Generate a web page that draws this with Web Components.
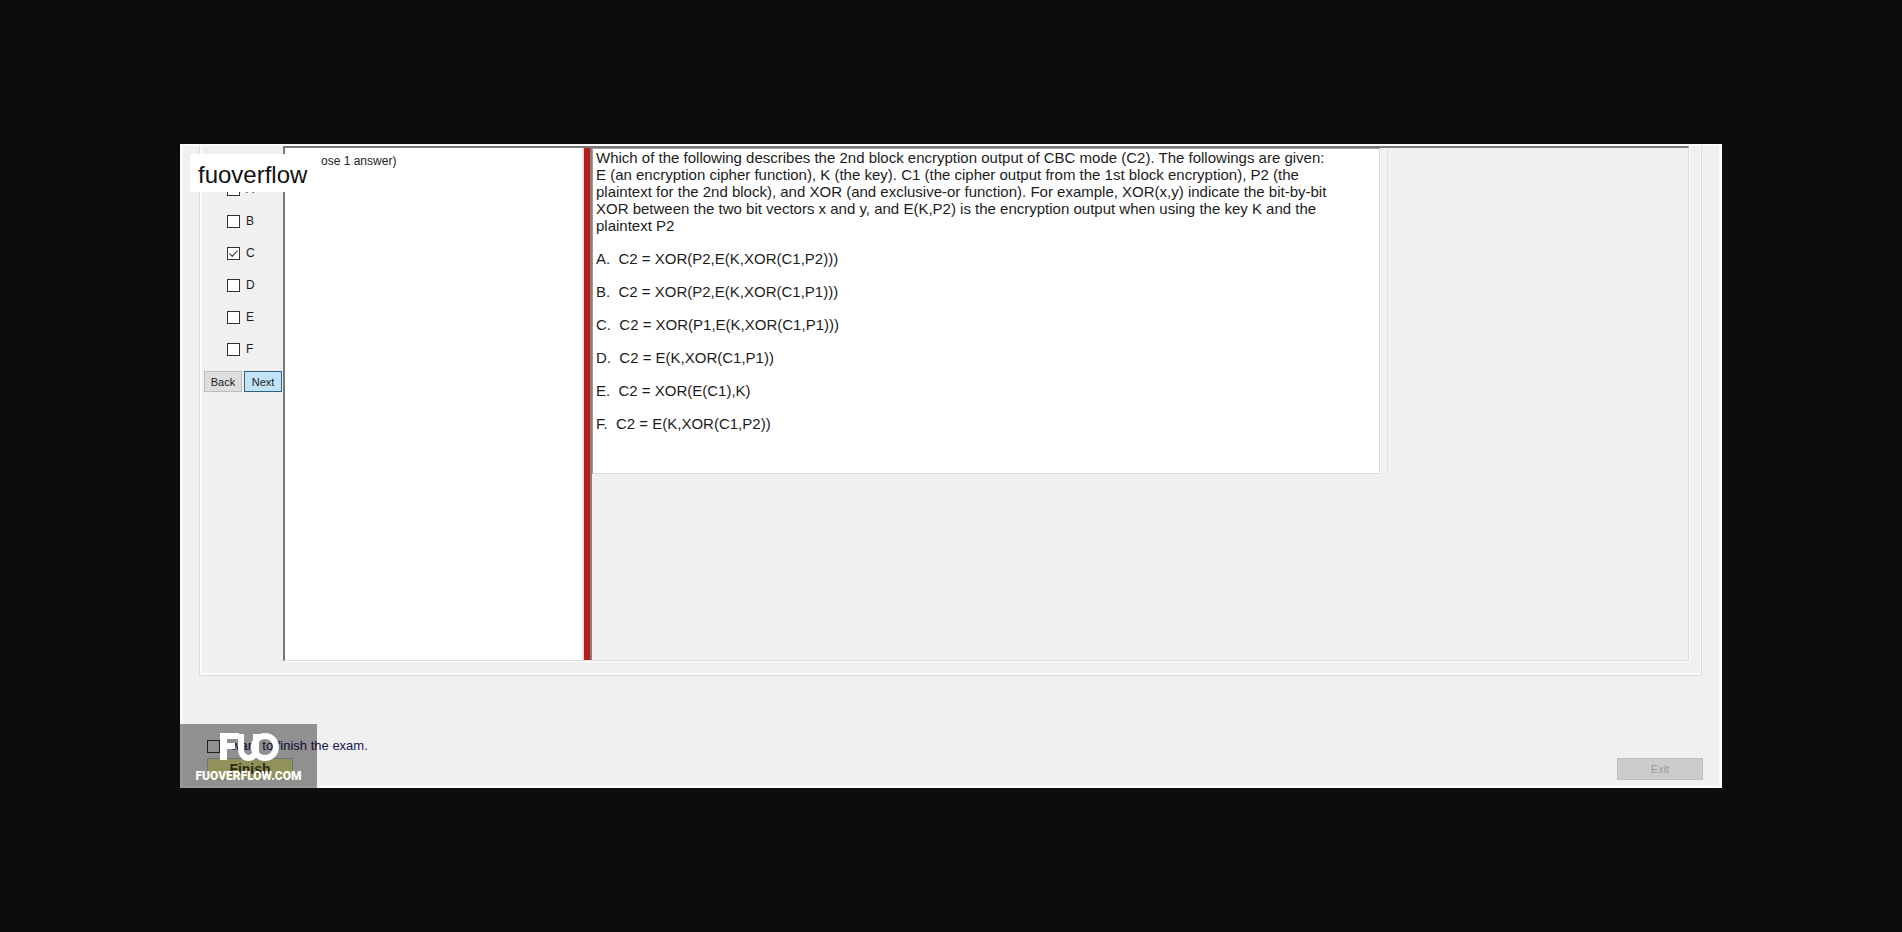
<!DOCTYPE html>
<html lang="en">
<head>
<meta charset="utf-8">
<title>Exam</title>
<style>
  body { margin: 0; background: #0d0d0d; font-family: "Liberation Sans", Arial, sans-serif; color: #1c1c1c; }
</style>
</head>
<body>
<exam-viewer></exam-viewer>

<template id="viewer-tpl">
  <style>
    :host { display: flex; box-sizing: border-box; min-height: 100vh; padding: 144px 180px; }
    main { position: relative; flex: 1; display: flex; flex-direction: column; background: #f0f0f0; border: 2px solid #fcfcfc; border-width: 2px 3px; box-sizing: border-box; }
    .group { flex: 1; display: flex; margin: 0 17px 0 16px; padding: 0 12px 14px 0; border: 1px solid #dcdcdc; border-top: 0; box-shadow: inset 2px -2px #fcfcfc, inset -1px 0 #fcfcfc; }
    answer-list { width: 83px; }
    .panes { flex: 1; display: flex; border: 1px solid #dcdcdc; border-top: 2px solid #777; border-left: 2px solid #777; box-shadow: 1px 1px #fcfcfc; }
    .note { width: 297px; background: #fff; font-size: 12px; line-height: 14px; padding: 6px 0 0 10px; box-sizing: border-box; }
    .split { width: 6px; background: #b01f1c; border-left: 2px solid #fbdcda; border-right: 2px solid #8b7b7d; }
    .work { flex: 1; }
    question-card { width: 795px; max-width: 100%; }
    exam-footer { height: 110px; }
    .tag { position: absolute; left: 7px; top: 8px; width: 131px; height: 38px; box-sizing: border-box; padding: 7px 8px 3px; background: #fff; color: #111; font-size: 24px; line-height: 28px; }
    brand-mark { position: absolute; left: -3px; bottom: -2px; }
  </style>
  <main>
    <div class="group">
      <answer-list></answer-list>
      <div class="panes">
        <div class="note">(Choose 1 answer)</div>
        <div class="split"></div>
        <div class="work">
          <question-card>
            <p>Which of the following describes the 2nd block encryption output of CBC mode (C2). The followings are given:<br>E (an encryption cipher function), K (the key). C1 (the cipher output from the 1st block encryption), P2 (the<br>plaintext for the 2nd block), and XOR (and exclusive-or function). For example, XOR(x,y) indicate the bit-by-bit<br>XOR between the two bit vectors x and y, and E(K,P2) is the encryption output when using the key K and the<br>plaintext P2</p>
          </question-card>
        </div>
      </div>
    </div>
    <exam-footer></exam-footer>
    <div class="tag">fuoverflow</div>
    <brand-mark></brand-mark>
  </main>
</template>

<template id="answers-tpl">
  <style>
    :host { display: block; padding-top: 27px; box-sizing: border-box; }
    .opt { display: flex; align-items: center; gap: 6px; height: 32px; padding-left: 27px; font-size: 12px; line-height: 14px; }
    .nav { display: flex; gap: 2px; padding: 6px 0 0 4px; }
    button { font: 11px/14px "Liberation Sans", Arial, sans-serif; box-sizing: border-box; width: 38px; height: 21px; padding: 0; border: 1px solid #bdbdbd; background: #dedede; color: #1c1c1c; }
    button.next { background: #c2e2f6; border-color: #2b5f86; }
  </style>
  <div class="list"></div>
  <div class="nav"><button type="button">Back</button><button type="button" class="next">Next</button></div>
</template>

<template id="tick-tpl">
  <style>
    :host { display: block; width: 13px; height: 13px; }
    input { appearance: none; display: block; margin: 0; width: 13px; height: 13px; box-sizing: border-box; border: 1px solid #333; background: var(--tick-bg, #fff); }
    input:checked { background: #fff url("data:image/svg+xml,%3Csvg xmlns='http://www.w3.org/2000/svg' viewBox='0 0 11 11'%3E%3Cpath d='M1.5 5.5L4.2 8.3L9.5 2.6' fill='none' stroke='%23444' stroke-width='1.2'/%3E%3C/svg%3E"); }
  </style>
  <input type="checkbox">
</template>

<template id="question-tpl">
  <style>
    :host { display: block; box-sizing: border-box; border-right: 7px solid #f3f3f3; box-shadow: 1px 0 #e2e2e2; }
    section { box-sizing: border-box; min-height: 326px; background: #fff; border-top: 1px solid #999; border-left: 1px solid #999; border-bottom: 1px solid #dcdcdc; border-right: 1px solid #dcdcdc; padding: 0 0 0 3px; font-size: 15px; line-height: 17px; white-space: nowrap; }
    ::slotted(p) { margin: 0; }
    ol { list-style: none; margin: 8px 0 0; padding: 0; line-height: 33px; white-space: pre; }
  </style>
  <section><slot></slot><ol></ol></section>
</template>

<template id="footer-tpl">
  <style>
    :host { display: flex; justify-content: space-between; align-items: flex-end; box-sizing: border-box; padding: 0 16px 6px 24px; }
    label { display: flex; align-items: center; gap: 4px; font-size: 13px; line-height: 16px; color: #1c1450; }
    button { display: block; box-sizing: border-box; width: 86px; height: 22px; padding: 0; font: 12px/14px "Liberation Sans", Arial, sans-serif; border: 1px solid #bfbfbf; }
    .finish { margin-top: 4px; background: #f2f29a; color: #4a4a1c; font-size: 14px; font-weight: bold; }
    .exit { background: #ccc; color: #9c9c9c; font-size: 11px; }
    exam-tick { --tick-bg: transparent; }
  </style>
  <div>
    <label><exam-tick label="I want to finish the exam."></exam-tick>I want to finish the exam.</label>
    <button type="button" class="finish">Finish</button>
  </div>
  <button type="button" class="exit" disabled>Exit</button>
</template>

<template id="brand-tpl">
  <style>
    :host { display: flex; flex-direction: column; align-items: center; box-sizing: border-box; width: 137px; height: 64px; padding-top: 8px; background: rgba(0,0,0,.4); color: #fff; }
    svg { display: block; }
    b { margin-top: 5px; font: 900 12px/18px Roboto, "Liberation Sans", sans-serif; }
  </style>
  <svg width="60" height="30" viewBox="0 0 60 30" aria-hidden="true">
    <path fill="#fff" d="M1 1H20V7H8V11H16V17H8V28H1Z"/>
    <path fill="none" stroke="#fff" stroke-width="6" d="M22 2V18A7.5 8 0 0 0 37 18V2"/>
    <circle fill="none" stroke="#fff" stroke-width="6" cx="46" cy="15" r="11"/>
  </svg>
  <b>FUOVERFLOW.COM</b>
</template>

<script>
  class TemplateElement extends HTMLElement {
    constructor() {
      super();
      this.attachShadow({ mode: "open" }).append(
        document.getElementById(this.constructor.template).content.cloneNode(true));
    }
  }
  class ExamTick extends TemplateElement {
    static template = "tick-tpl";
    connectedCallback() {
      const input = this.shadowRoot.querySelector("input");
      input.checked = this.hasAttribute("checked");
      input.setAttribute("aria-label", this.getAttribute("label"));
    }
  }
  class AnswerList extends TemplateElement {
    static template = "answers-tpl";
    connectedCallback() {
      this.shadowRoot.querySelector(".list").innerHTML = [..."ABCDEF"].map(c =>
        `<label class="opt"><exam-tick label="${c}"${c === "C" ? " checked" : ""}></exam-tick>${c}</label>`).join("");
    }
  }
  class QuestionCard extends TemplateElement {
    static template = "question-tpl";
    connectedCallback() {
      const options = [
        "A.  C2 = XOR(P2,E(K,XOR(C1,P2)))",
        "B.  C2 = XOR(P2,E(K,XOR(C1,P1)))",
        "C.  C2 = XOR(P1,E(K,XOR(C1,P1)))",
        "D.  C2 = E(K,XOR(C1,P1))",
        "E.  C2 = XOR(E(C1),K)",
        "F.  C2 = E(K,XOR(C1,P2))"
      ];
      this.shadowRoot.querySelector("ol").innerHTML = options.map(o => `<li>${o}</li>`).join("");
    }
  }
  class ExamFooter extends TemplateElement { static template = "footer-tpl"; }
  class BrandMark extends TemplateElement { static template = "brand-tpl"; }
  class ExamViewer extends TemplateElement { static template = "viewer-tpl"; }
  customElements.define("exam-tick", ExamTick);
  customElements.define("answer-list", AnswerList);
  customElements.define("question-card", QuestionCard);
  customElements.define("exam-footer", ExamFooter);
  customElements.define("brand-mark", BrandMark);
  customElements.define("exam-viewer", ExamViewer);
</script>
</body>
</html>
